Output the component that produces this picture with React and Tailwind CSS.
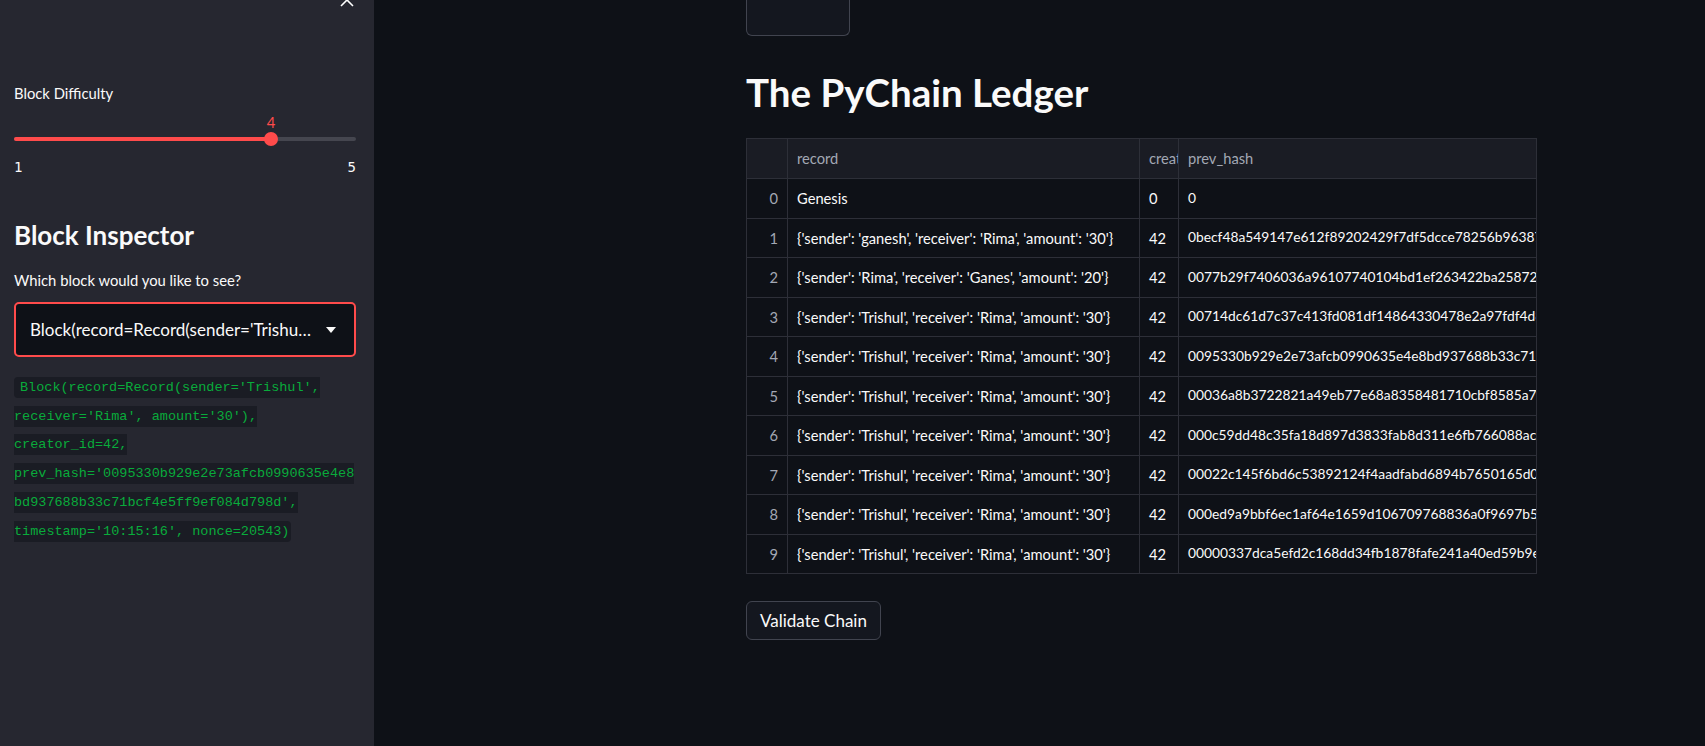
import React from 'react';

const rows = [
  { rec: 'Genesis', c: '0', h: '0' },
  { rec: "{'sender': 'ganesh', 'receiver': 'Rima', 'amount': '30'}", c: '42', h: '0becf48a549147e612f89202429f7df5dcce78256b963872d1f0a6c3e8b4' },
  { rec: "{'sender': 'Rima', 'receiver': 'Ganes', 'amount': '20'}", c: '42', h: '0077b29f7406036a96107740104bd1ef263422ba258721c9e4a0f3d6b7' },
  { rec: "{'sender': 'Trishul', 'receiver': 'Rima', 'amount': '30'}", c: '42', h: '00714dc61d7c37c413fd081df14864330478e2a97fdf4d8b2c61e0a95f' },
  { rec: "{'sender': 'Trishul', 'receiver': 'Rima', 'amount': '30'}", c: '42', h: '0095330b929e2e73afcb0990635e4e8bd937688b33c71bcf4e5ff9ef084d798d' },
  { rec: "{'sender': 'Trishul', 'receiver': 'Rima', 'amount': '30'}", c: '42', h: '00036a8b3722821a49eb77e68a8358481710cbf8585a7e2d94c0b16f3a' },
  { rec: "{'sender': 'Trishul', 'receiver': 'Rima', 'amount': '30'}", c: '42', h: '000c59dd48c35fa18d897d3833fab8d311e6fb766088ac5e2f71b09d4a' },
  { rec: "{'sender': 'Trishul', 'receiver': 'Rima', 'amount': '30'}", c: '42', h: '00022c145f6bd6c53892124f4aadfabd6894b7650165d07a3e19c2f8b5' },
  { rec: "{'sender': 'Trishul', 'receiver': 'Rima', 'amount': '30'}", c: '42', h: '000ed9a9bbf6ec1af64e1659d106709768836a0f9697b5c3d80e4a2f1b' },
  { rec: "{'sender': 'Trishul', 'receiver': 'Rima', 'amount': '30'}", c: '42', h: '00000337dca5efd2c168dd34fb1878fafe241a40ed59b9e6f4a21c7d03' },
];

const cell = 'border-r border-b border-[#2d2f38] px-[9px] flex items-center whitespace-nowrap overflow-hidden';

const App = () => {
  return (
    <div className="flex min-h-[746px] w-full bg-[#0e1117] font-[Lato,'Noto_Sans',sans-serif] text-[#fafafa]">
      {/* Sidebar */}
      <aside className="relative w-[374px] shrink-0 bg-[#262730] pl-[14px] pr-[18px] pt-[83px]">
        <button className="absolute left-[340px] top-[-7px] text-white">
          <svg width="14" height="14" viewBox="0 0 14 14" fill="none" stroke="currentColor" strokeWidth="1.6">
            <path d="M1 1l12 12M13 1L1 13" />
          </svg>
        </button>

        <p className="text-[14.8px] leading-5">Block Difficulty</p>

        {/* Slider */}
        <div className="relative mt-[9px] h-[70px]">
          <span className="absolute left-[250px] top-0 w-[14px] text-center text-[14.8px] leading-5 text-[#ff4b4b]">4</span>
          <div className="absolute left-0 right-0 top-[25px] h-[4px] rounded-full bg-[#45464f]">
            <div className="h-full w-[257px] rounded-l-full bg-[#ff4b4b]" />
          </div>
          <div className="absolute left-[250px] top-[20px] h-[14px] w-[14px] rounded-full bg-[#ff4b4b]" />
          <div className="absolute left-0 right-0 top-[45px] flex justify-between font-['DejaVu_Sans_Mono',monospace] text-sm leading-5">
            <span>1</span>
            <span>5</span>
          </div>
        </div>

        <h2 className="mt-[37px] text-[26px] font-bold leading-8">Block Inspector</h2>

        <p className="mt-[19px] text-[14.8px] leading-5">Which block would you like to see?</p>

        <div className="mt-[12px] flex h-[55px] items-center rounded-[5px] border-2 border-[#ff4b4b] bg-[#0e1117] pl-[14px] pr-[18px]">
          <span className="min-w-0 flex-1 truncate text-[17px]">Block(record=Record(sender='Trishul', receiver='Rima', amount='30'), creator_id=42)</span>
          <svg className="ml-[14px] shrink-0" width="10" height="6" viewBox="0 0 10 6" fill="#fafafa">
            <path d="M0 0h10L5 6z" />
          </svg>
        </div>

        <div className="mt-[17px] font-['Liberation_Mono',monospace] text-[13.5px] leading-[28.7px] text-[#09ab3b]">
          <span className="rounded-[4px] bg-[#1a1c24] py-[3px] pl-[6px] pr-[2px]">
            Block(record=Record(sender='Trishul',<br />
            receiver='Rima', amount='30'),<br />
            creator_id=42,<br />
            prev_hash='0095330b929e2e73afcb0990635e4e8<br />
            bd937688b33c71bcf4e5ff9ef084d798d',<br />
            timestamp='10:15:16', nonce=20543)
          </span>
        </div>
      </aside>

      {/* Main */}
      <main className="flex-1 pl-[372px]">
        <div className="w-[791px]">
          <div className="h-[36px] w-[104px] rounded-b-[6px] border-x border-b border-[#41444f] bg-[#14171f]" />

          <h1 className="mt-[32px] text-[38.5px] font-bold leading-[48px]">The PyChain Ledger</h1>

          <div className="mt-[22px] border-t border-l border-[#2d2f38] text-[14.7px]">
            <div className="grid h-[40px] grid-cols-[41px_352px_39px_1fr] bg-[#1a1c24] text-[#a3a8b4]">
              <div className={cell} />
              <div className={cell}>record</div>
              <div className={cell}>creator_id</div>
              <div className={cell}>prev_hash</div>
            </div>
            {rows.map((r, i) => (
              <div key={i} className="grid h-[39.5px] grid-cols-[41px_352px_39px_1fr]">
                <div className={`${cell} justify-end text-[#a3a8b4]`}>{i}</div>
                <div className={cell}>{r.rec}</div>
                <div className={cell}>{r.c}</div>
                <div className={`${cell} text-[13.8px]`}>{r.h}</div>
              </div>
            ))}
          </div>

          <button className="mt-[27px] h-[39px] rounded-[6px] border border-[#41444f] bg-[#14171f] px-[13px] text-[17px]">
            Validate Chain
          </button>
        </div>
      </main>
    </div>
  );
};

export default App;
